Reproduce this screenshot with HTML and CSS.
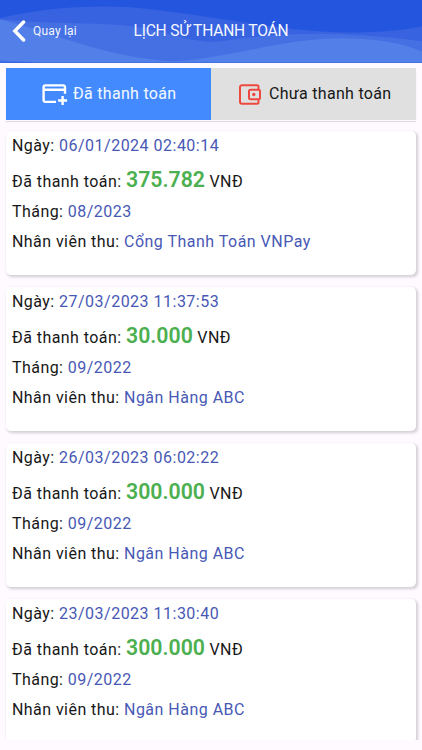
FILE: index.html
```html
<!DOCTYPE html>
<html lang="vi">
<head>
<meta charset="utf-8">
<title>Lịch sử thanh toán</title>
<link rel="stylesheet" href="styles.css">
</head>
<body>
<header class="header">
  <svg class="waves" viewBox="0 0 422 62" preserveAspectRatio="none" aria-hidden="true">
    <path fill="#3762e0" d="M0 18C45 7 105 3 158 10C238 20 298 34 365 32Q400 31 422 26V62H0Z"/>
    <path fill="#4470e3" d="M0 19C50 25 108 20 150 29C184 37 199 43 222 41C281 31 350 31 422 41V62H0Z"/>
    <path fill="#537fe8" d="M0 19C70 38 104 56 174 61C232 57 284 38 341 38Q390 38 422 51V62H36L0 60Z"/>
  </svg>
  <a class="back">
    <svg class="chevron" viewBox="0 0 14 22" aria-hidden="true"><path d="M11.6 2 2.8 11l8.8 9"/></svg>
    <span>Quay lại</span>
  </a>
  <h1 class="title">LỊCH SỬ THANH TOÁN</h1>
</header>
<nav class="tabs">
  <div class="tab active">
    <svg class="card-icon" viewBox="0 0 26 22" aria-hidden="true"><path d="M14 17.9H3.4a1.8 1.8 0 0 1-1.8-1.8V3.2a1.8 1.8 0 0 1 1.8-1.8h17.8a1.8 1.8 0 0 1 1.8 1.8V9.8M2 5.7h21M20.6 12v9M16.1 16.5h9"/></svg>
    <span>Đã thanh toán</span>
  </div>
  <div class="tab">
    <svg class="wallet-icon" viewBox="0 0 22 21" aria-hidden="true"><path d="M19.5 5V2.7a1.5 1.5 0 0 0-1.5-1.5H3a2 2 0 0 0-2 2v14.5a2 2 0 0 0 2 2h15a1.5 1.5 0 0 0 1.5-1.5V16M11.5 5.7h8a1.5 1.5 0 0 1 1.5 1.5v6.6a1.5 1.5 0 0 1-1.5 1.5h-8a1.5 1.5 0 0 1-1.5-1.5V7.2a1.5 1.5 0 0 1 1.5-1.5Z"/><circle cx="14.8" cy="10.5" r="1.7"/></svg>
    <span>Chưa thanh toán</span>
  </div>
</nav>
<main class="list">
  <article class="card">
    <p>Ngày: <span class="value">06/01/2024 02:40:14</span></p>
    <p class="paid">Đã thanh toán: <strong>375.782</strong> VNĐ</p>
    <p>Tháng: <span class="value">08/2023</span></p>
    <p>Nhân viên thu: <span class="value">Cổng Thanh Toán VNPay</span></p>
  </article>
  <article class="card">
    <p>Ngày: <span class="value">27/03/2023 11:37:53</span></p>
    <p class="paid">Đã thanh toán: <strong>30.000</strong> VNĐ</p>
    <p>Tháng: <span class="value">09/2022</span></p>
    <p>Nhân viên thu: <span class="value">Ngân Hàng ABC</span></p>
  </article>
  <article class="card">
    <p>Ngày: <span class="value">26/03/2023 06:02:22</span></p>
    <p class="paid">Đã thanh toán: <strong>300.000</strong> VNĐ</p>
    <p>Tháng: <span class="value">09/2022</span></p>
    <p>Nhân viên thu: <span class="value">Ngân Hàng ABC</span></p>
  </article>
  <article class="card">
    <p>Ngày: <span class="value">23/03/2023 11:30:40</span></p>
    <p class="paid">Đã thanh toán: <strong>300.000</strong> VNĐ</p>
    <p>Tháng: <span class="value">09/2022</span></p>
    <p>Nhân viên thu: <span class="value">Ngân Hàng ABC</span></p>
  </article>
</main>
</body>
</html>
```
FILE: styles.css
```css
* { box-sizing: border-box; }
body {
  margin: 0;
  height: 750px;
  padding-bottom: 10px;
  display: flex;
  flex-direction: column;
  overflow: hidden;
  background: #fefaff;
  color: #171717;
  font: 16px/20px Roboto, sans-serif;
}
.header {
  position: relative;
  flex: none;
  height: 62.5px;
  display: grid;
  grid-template-columns: 133.5px 1fr;
  align-items: center;
  background: #2455df;
  color: #f5f8ff;
}
.waves { position: absolute; inset: 0; width: 100%; height: 100%; }
.back, .title { position: relative; }
.back {
  display: flex;
  align-items: center;
  gap: 7px;
  padding-left: 12px;
  font-size: 12px;
  letter-spacing: .2px;
}
.chevron { width: 14px; height: 22px; }
.chevron path { fill: none; stroke: #fff; stroke-width: 3.4; stroke-linecap: round; stroke-linejoin: miter; }
.title { margin: 0; font-size: 15.6px; font-weight: 400; letter-spacing: -.23px; white-space: nowrap; }
.tabs {
  flex: none;
  height: 52px;
  margin: 5.5px 6px 0;
  display: grid;
  grid-template-columns: 205px 205px;
  box-shadow: 0 1px 0 #fcfaff, 0 2px 1px #dedbe3;
}
.tab {
  display: flex;
  align-items: center;
  padding-left: 28px;
  background: #e0e0e0;
  letter-spacing: .3px;
  white-space: nowrap;
}
.active { padding-left: 36px; background: #448aff; color: #f4faff; }
.card-icon { width: 26px; height: 22px; margin: 2px 5px 0 0; }
.wallet-icon { width: 22px; height: 21px; margin-right: 8px; }
.card-icon path, .wallet-icon path { fill: none; stroke: #fff; stroke-width: 2.4; }
.wallet-icon path { stroke: #ee493f; stroke-width: 2; }
.wallet-icon circle { fill: #ee493f; }
.list {
  flex: 1;
  min-height: 0;
  overflow: hidden;
  padding: 11px 6px 0;
  display: flex;
  flex-direction: column;
  gap: 12px;
}
.card {
  flex: none;
  height: 144px;
  padding: 5px 6px;
  border-radius: 5px;
  background: #fff;
  box-shadow: 1.5px 1.5px 3px #d3cdd5;
}
.card p { margin: 0; height: 30px; letter-spacing: .44px; white-space: nowrap; }
.card .paid { height: 36px; padding-top: 4px; }
.paid strong { color: #4caf50; font-size: 21.3px; font-weight: 600; letter-spacing: 0; line-height: 20px; }
.value { color: #4758b5; letter-spacing: .49px; }
```
